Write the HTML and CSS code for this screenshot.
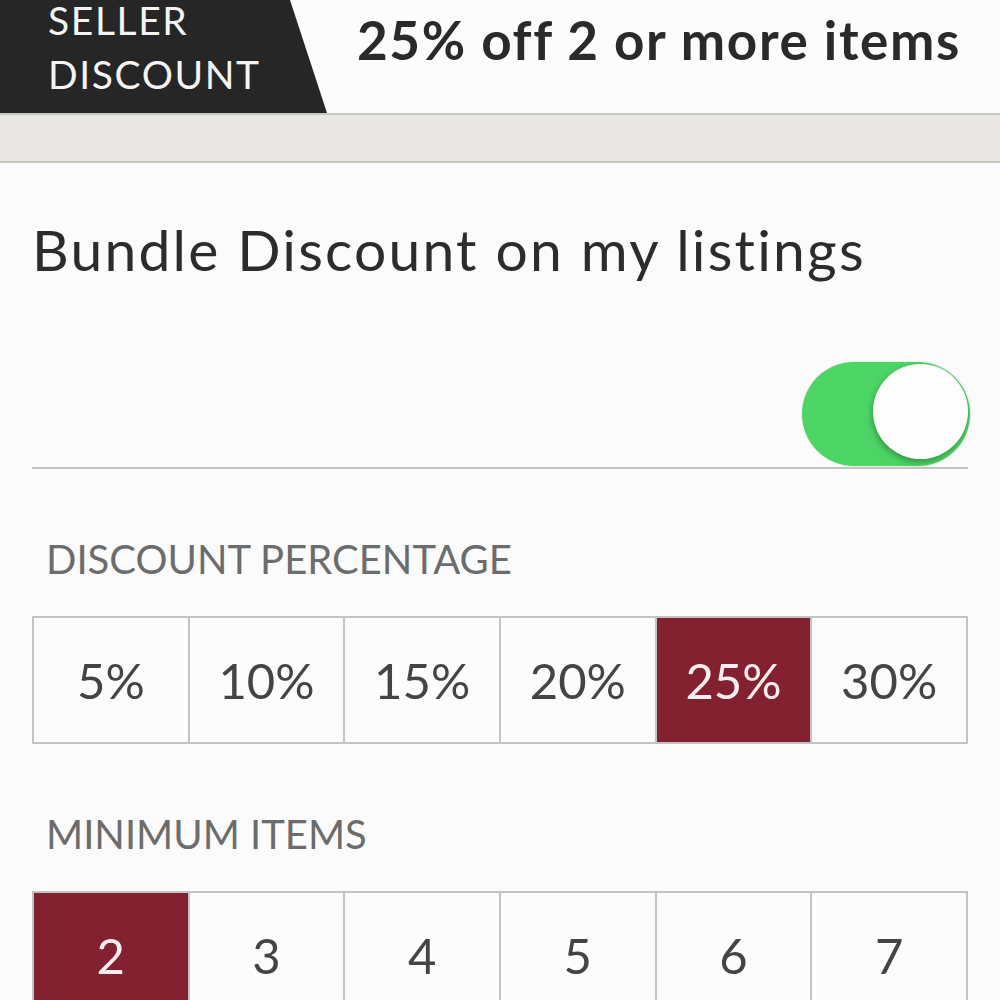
FILE: index.html
```html
<!DOCTYPE html>
<html lang="en">
<head>
<meta charset="utf-8">
<title>Bundle Discount</title>
<link rel="stylesheet" href="styles.css">
</head>
<body>
  <header class="promo">
    <div class="badge">
      <span class="badge-line">SELLER</span>
      <span class="badge-line">DISCOUNT</span>
    </div>
    <div class="promo-text">25% off 2 or more items</div>
  </header>
  <div class="band"></div>

  <main class="settings">
    <h1 class="title">Bundle Discount on my listings</h1>

    <div class="toggle-row">
      <div class="toggle is-on"><span class="knob"></span></div>
    </div>

    <h2 class="label">DISCOUNT PERCENTAGE</h2>
    <div class="segments">
      <div class="seg">5%</div>
      <div class="seg">10%</div>
      <div class="seg">15%</div>
      <div class="seg">20%</div>
      <div class="seg is-active">25%</div>
      <div class="seg">30%</div>
    </div>

    <h2 class="label">MINIMUM ITEMS</h2>
    <div class="segments">
      <div class="seg is-active">2</div>
      <div class="seg">3</div>
      <div class="seg">4</div>
      <div class="seg">5</div>
      <div class="seg">6</div>
      <div class="seg">7</div>
    </div>
  </main>
</body>
</html>
```

FILE: styles.css
```css
html, body {
  margin: 0;
  padding: 0;
}

body {
  background: #fcfbfb;
  font-family: "Lato", "Liberation Sans", sans-serif;
  color: #333;
  height: 1000px;
  overflow: hidden;
}

/* top promo strip */
.promo {
  display: flex;
  height: 113px;
  background: #fdfcfc;
}

.badge {
  width: 327px;
  height: 113px;
  box-sizing: border-box;
  padding-left: 48px;
  background: #262626;
  clip-path: polygon(0 0, 290px 0, 327px 113px, 0 113px);
  flex: none;
}

.badge-line {
  display: block;
  font-size: 39px;
  line-height: 40px;
  letter-spacing: 1.6px;
  color: #f4f4f4;
}

.badge-line + .badge-line {
  margin-top: 14px;
}

.promo-text {
  margin-left: 30px;
  padding-top: 8px;
  font-size: 53px;
  line-height: 1.2;
  font-weight: 700;
  letter-spacing: 1.6px;
  color: #2a2a2a;
}

.band {
  height: 46px;
  background: #e9e7e3;
  border-top: 2px solid #c9c7c2;
  border-bottom: 2px solid #c9c7c2;
}

/* settings form */
.settings {
  padding: 0 32px;
}

.title {
  margin: 52px 0 0;
  font-size: 57px;
  line-height: 1.2;
  font-weight: 400;
  letter-spacing: 2.2px;
  color: #2c2c2c;
}

.toggle-row {
  display: flex;
  justify-content: flex-end;
  margin-top: 79px;
  padding-bottom: 1px;
  border-bottom: 2px solid #c4c4c4;
}

.toggle {
  width: 168px;
  height: 104px;
  margin-right: -2px;
  border-radius: 52px;
  background: #4cd564;
  display: flex;
  align-items: flex-start;
  justify-content: flex-end;
  padding: 2px 2px 0;
  box-sizing: border-box;
  box-shadow: 0 0 0 1px rgba(0, 0, 0, 0.05);
}

.knob {
  width: 95px;
  height: 95px;
  border-radius: 50%;
  background: #fdfdfd;
  box-shadow: -1px 3px 6px rgba(0, 0, 0, 0.3);
}

.label {
  margin: 66px 0 0 14px;
  font-size: 40px;
  line-height: 1.2;
  font-weight: 400;
  color: #6c6c6c;
}

.segments {
  display: grid;
  grid-template-columns: repeat(6, 1fr);
  gap: 2px;
  padding: 2px;
  margin-top: 33px;
  background: #c3c3c3;
}

.seg {
  height: 124px;
  background: #fdfcfc;
  display: flex;
  align-items: center;
  justify-content: center;
  font-size: 49px;
  color: #444;
}

.seg.is-active {
  background: #842130;
  color: #fbeef0;
}
```
